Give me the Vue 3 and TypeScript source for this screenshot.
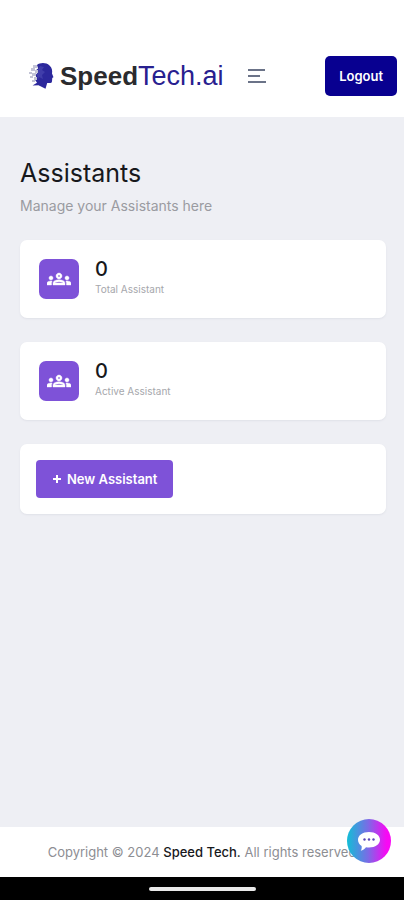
<script setup lang="ts">
interface Stat {
  label: string
  value: number
}

const stats: Stat[] = [
  { label: 'Total Assistant', value: 0 },
  { label: 'Active Assistant', value: 0 },
]
</script>

<template>
  <div class="page">
    <header class="topbar">
      <a class="brand" href="#" aria-label="SpeedTech.ai">
        <svg class="brand-mark" viewBox="0 0 26 28" aria-hidden="true">
          <path
            fill="#2c289c"
            d="M9 3C12 .5 18 .2 21.500 3.500c2.500 2.300 3 5.300 2.500 8l1.300 3.200c.2.600-.2 1-1 1.100l-.3 3.400c-.1 1.500-1.300 2-2.800 1.900l-2-.2-1.700 5.800-7-3.500-6 .3 4.500-2.800-2-3 1.700-1.500-1.200-3 1.600-2-1.200-3 2.200-1.600z"
          />
          <path fill="#5451b8" d="M12 4l4 1-2 3 3 2-3 3 1 4-4-2-1 3-1-5 0-4z" opacity=".5" />
          <g fill="#c3c4d6">
            <rect x="5" y="3" width="4" height="3" />
            <rect x="3" y="6" width="4" height="3" />
            <rect x="7" y="8" width="3" height="3" />
            <rect x="1" y="10" width="3" height="2" />
            <rect x="4" y="11" width="4" height="3" />
            <rect x="2" y="14" width="3" height="2" />
            <rect x="6" y="15" width="3" height="3" />
            <rect x="4" y="18" width="3" height="2" />
          </g>
        </svg>
        <span class="brand-name"><b>Speed</b>Tech.ai</span>
      </a>
      <button class="menu" type="button" aria-label="Toggle menu">
        <svg viewBox="0 0 18 16" aria-hidden="true">
          <path d="M0 2h17M0 8h12M0 14h18" fill="none" stroke="#6b7388" stroke-width="2" />
        </svg>
      </button>
      <button class="logout" type="button">Logout</button>
    </header>

    <main class="content">
      <h1>Assistants</h1>
      <p class="lead">Manage your Assistants here</p>

      <div class="cards">
        <section v-for="stat in stats" :key="stat.label" class="card stat">
          <span class="stat-icon">
            <svg viewBox="0 0 24 24" aria-hidden="true">
              <path
                fill="#fff"
                stroke="#fff"
                stroke-width=".4"
                d="M4 13c1.100 0 2-.9 2-2s-.9-2-2-2-2 .9-2 2 .9 2 2 2zm1.130 1.100C4.760 14.040 4.390 14 4 14c-.99 0-1.930.21-2.780.58C.48 14.900 0 15.620 0 16.430V18h4.500v-1.610c0-.83.23-1.610.63-2.290zM20 13c1.100 0 2-.9 2-2s-.9-2-2-2-2 .9-2 2 .9 2 2 2zm4 3.430c0-.81-.48-1.530-1.220-1.850C21.930 14.210 20.990 14 20 14c-.39 0-.76.04-1.130.1.400.68.630 1.460.630 2.290V18H24v-1.570zm-7.760-2.780C15.070 13.130 13.630 12.750 12 12.750s-3.070.39-4.240.9C6.680 14.130 6 15.210 6 16.390V18h12v-1.610c0-1.180-.68-2.260-1.760-2.740zM8.070 16c.09-.23.13-.39.91-.69.97-.38 1.990-.56 3.020-.56s2.050.18 3.020.56c.77.3.81.46.91.69H8.070zM12 8c.55 0 1 .45 1 1s-.45 1-1 1-1-.45-1-1 .45-1 1-1m0-2c-1.660 0-3 1.340-3 3s1.340 3 3 3 3-1.340 3-3-1.340-3-3-3z"
              />
            </svg>
          </span>
          <div class="stat-text">
            <strong>{{ stat.value }}</strong>
            <span>{{ stat.label }}</span>
          </div>
        </section>

        <section class="card actions">
          <button class="create" type="button">
            <svg viewBox="0 0 10 10" aria-hidden="true">
              <path d="M5 1v8M1 5h8" stroke="#fff" stroke-width="2" />
            </svg>
            New Assistant
          </button>
        </section>
      </div>
    </main>

    <footer class="footer">
      <p>Copyright © 2024 <b>Speed Tech.</b> All rights reserved</p>
      <button class="chat" type="button" aria-label="Open chat">
        <svg viewBox="0 0 24 22" aria-hidden="true">
          <path
            fill="#fff"
            d="M12 2c6.300 0 11 3.300 11 7.800s-4.700 7.700-11 7.700c-1 0-2-.1-3-.3-1.500 1.700-3 2.900-5.300 3.600 1-1.300 1.200-2.900.9-4.700C2.200 14.600 1 12.400 1 9.800 1 5.300 5.700 2 12 2z"
          />
          <g fill="#5a45b8">
            <circle cx="7.500" cy="9.500" r="1.200" />
            <circle cx="12" cy="9.500" r="1.200" />
            <circle cx="16.500" cy="9.500" r="1.200" />
          </g>
        </svg>
      </button>
    </footer>
    <div class="system-bar"><span></span></div>
  </div>
</template>

<style>
body {
  margin: 0;
}
</style>

<style scoped>
.page {
  box-sizing: border-box;
  min-height: 100vh;
  display: flex;
  flex-direction: column;
  background: #eeeff4;
  color: #17181c;
  font-family: Inter, 'Liberation Sans', sans-serif;
}

button {
  border: 0;
  font: inherit;
  cursor: pointer;
}

svg {
  display: block;
}

.topbar {
  display: flex;
  align-items: center;
  padding: 56px 7px 21px 28px;
  background: #fff;
}

.brand {
  display: flex;
  align-items: center;
  gap: 6px;
  color: #28208f;
  text-decoration: none;
}

.brand-mark {
  width: 26px;
  height: 28px;
}

.brand-name {
  font-family: 'Liberation Sans', Arial, sans-serif;
  font-size: 27px;
  line-height: 32px;
}

.brand-name b {
  color: #2b2b2e;
  font-size: 26px;
}

.menu {
  margin-left: 24px;
  padding: 0;
  background: none;
}

.menu svg {
  width: 18px;
  height: 16px;
}

.logout {
  height: 40px;
  margin-left: auto;
  padding: 0 14px;
  border-radius: 5px;
  background: #080090;
  color: #fff;
  font-size: 13px;
  font-weight: 600;
}

.content {
  flex: 1;
  padding: 40px 18px 24px 20px;
}

h1 {
  margin: 0;
  font-size: 25px;
  font-weight: 400;
  line-height: 32px;
}

.lead {
  margin: 7px 0 24px;
  color: #9a9ba1;
  font-size: 14px;
  line-height: 20px;
}

.cards {
  display: grid;
  gap: 24px;
}

.card {
  border-radius: 7px;
  background: #fff;
  box-shadow: 0 1px 2px #dfe1e8;
}

.stat {
  display: flex;
  align-items: flex-start;
  gap: 16px;
  padding: 19px;
}

.stat-icon {
  display: grid;
  place-items: center;
  width: 40px;
  height: 40px;
  border-radius: 7px;
  background: #7e52d8;
}

.stat-icon svg {
  width: 24px;
  height: 24px;
}

.stat-text {
  display: grid;
  gap: 4px;
}

.stat-text strong {
  font-size: 20px;
  font-weight: 500;
  line-height: 20px;
}

.stat-text span {
  color: #a6a7ac;
  font-size: 10px;
  line-height: 12px;
}

.actions {
  padding: 16px;
}

.create {
  display: flex;
  align-items: center;
  gap: 5px;
  height: 38px;
  padding: 0 16px;
  border-radius: 4px;
  background: #7e52d8;
  color: #fff;
  font-size: 13px;
  font-weight: 600;
}

.create svg {
  width: 10px;
  height: 10px;
}

.footer {
  position: relative;
  padding: 15px 16px;
  background: #fff;
  text-align: center;
}

.footer p {
  margin: 0;
  color: #8d8e93;
  font-size: 13px;
  line-height: 20px;
}

.footer b {
  color: #17181c;
  font-weight: 500;
}

.chat {
  position: absolute;
  top: -8px;
  right: 13px;
  display: grid;
  place-items: center;
  width: 44px;
  height: 44px;
  padding: 0;
  border-radius: 50%;
  background: linear-gradient(90deg, #12bed6, #7b6be6 48%, #f808f4 90%);
}

.chat svg {
  width: 24px;
  height: 22px;
}

.system-bar {
  display: grid;
  place-items: center;
  height: 23px;
  background: #000;
}

.system-bar span {
  width: 107px;
  height: 4px;
  border-radius: 2px;
  background: #e9e9e9;
}
</style>
